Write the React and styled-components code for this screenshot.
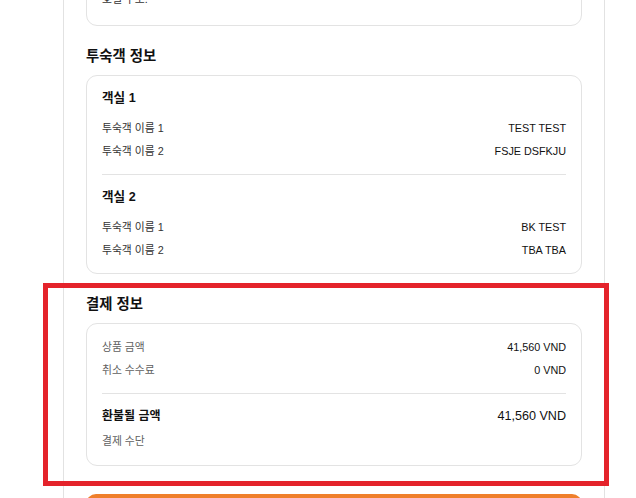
import React from "react";
import styled, { createGlobalStyle } from "styled-components";

const Global = createGlobalStyle`
  html, body { margin: 0; padding: 0; background: #fff; }
  body {
    font-family: "Liberation Sans", "Noto Sans CJK KR", Arial, sans-serif;
    color: #111;
    overflow: hidden;
  }
  * { box-sizing: border-box; }
`;

const Page = styled.div`
  position: relative;
  width: 636px;
  height: 498px;
  overflow: hidden;
`;

const Scroller = styled.div`
  margin-top: -24px;
`;

const Panel = styled.main`
  margin-left: 63px;
  width: 542px;
  border-left: 1px solid #e2e2e2;
  border-right: 1px solid #e2e2e2;
  padding: 0 22px 60px;
  background: #fff;
`;

const Card = styled.div`
  border: 1px solid #e3e3e3;
  border-radius: 11px;
  padding: ${(p) => p.$pad || "15px 15px 16px"};
  background: #fff;
`;

const Section = styled.section`
  margin-top: 20px;
`;

const Heading = styled.h2`
  margin: 0 0 9px;
  font-size: 14.4px;
  line-height: 20px;
  font-weight: 700;
  color: #111;
`;

const Room = styled.div`
  display: flex;
  flex-direction: column;
`;

const RoomTitle = styled.h3`
  margin: 0 0 14px;
  font-size: 12.6px;
  line-height: 18px;
  font-weight: 700;
  color: #111;
`;

const Rows = styled.div`
  display: flex;
  flex-direction: column;
  gap: 8px;
`;

const Row = styled.div`
  display: flex;
  justify-content: space-between;
  align-items: center;
  font-size: 10.8px;
  line-height: 15px;
`;

const Label = styled.span`
  color: ${(p) => (p.$muted ? "#5f5f5f" : "#333")};
`;

const Value = styled.span`
  color: #111;
`;

const Divider = styled.hr`
  border: 0;
  height: 1px;
  background: #e3e3e3;
  margin: ${(p) => p.$m || "15px 0 13px"};
`;

const TotalRow = styled.div`
  display: flex;
  justify-content: space-between;
  align-items: center;
  line-height: 18px;
  margin-bottom: 9px;
`;

const TotalLabel = styled.span`
  font-size: 12px;
  font-weight: 700;
  color: #111;
`;

const TotalValue = styled.span`
  font-size: 12.6px;
  color: #111;
`;

const ActionButton = styled.button`
  display: block;
  width: 100%;
  height: 46px;
  margin-top: 28px;
  border: 0;
  border-radius: 10px;
  background: #ef7f2b;
  color: #fff;
  font: inherit;
  font-size: 13px;
  font-weight: 700;
`;

const Highlight = styled.div`
  position: absolute;
  left: 43px;
  top: 283px;
  width: 566px;
  height: 203px;
  border: 5px solid #e4232b;
  pointer-events: none;
`;

const rooms = [
  { title: "객실 1", guests: ["TEST TEST", "FSJE DSFKJU"] },
  { title: "객실 2", guests: ["BK TEST", "TBA TBA"] },
];

export default function App() {
  return (
    <>
      <Global />
      <Page>
        <Scroller>
          <Panel>
            <Card $pad="15px 15px 18px">
              <Row>
                <Label>호텔 주소.</Label>
              </Row>
            </Card>

            <Section>
              <Heading>투숙객 정보</Heading>
              <Card $pad="13px 15px 15px">
                {rooms.map((room, i) => (
                  <React.Fragment key={room.title}>
                    {i > 0 && <Divider />}
                    <Room>
                      <RoomTitle>{room.title}</RoomTitle>
                      <Rows>
                        {room.guests.map((g, j) => (
                          <Row key={j}>
                            <Label>투숙객 이름 {j + 1}</Label>
                            <Value>{g}</Value>
                          </Row>
                        ))}
                      </Rows>
                    </Room>
                  </React.Fragment>
                ))}
              </Card>
            </Section>

            <Section>
              <Heading>결제 정보</Heading>
              <Card $pad="16px 15px 16px">
                <Rows>
                  <Row>
                    <Label $muted>상품 금액</Label>
                    <Value>41,560 VND</Value>
                  </Row>
                  <Row>
                    <Label $muted>취소 수수료</Label>
                    <Value>0 VND</Value>
                  </Row>
                </Rows>
                <Divider $m="15px 0 13px" />
                <TotalRow>
                  <TotalLabel>환불될 금액</TotalLabel>
                  <TotalValue>41,560 VND</TotalValue>
                </TotalRow>
                <Row>
                  <Label $muted>결제 수단</Label>
                </Row>
              </Card>
            </Section>

            <ActionButton type="button">환불 요청</ActionButton>
          </Panel>
        </Scroller>
        <Highlight />
      </Page>
    </>
  );
}
